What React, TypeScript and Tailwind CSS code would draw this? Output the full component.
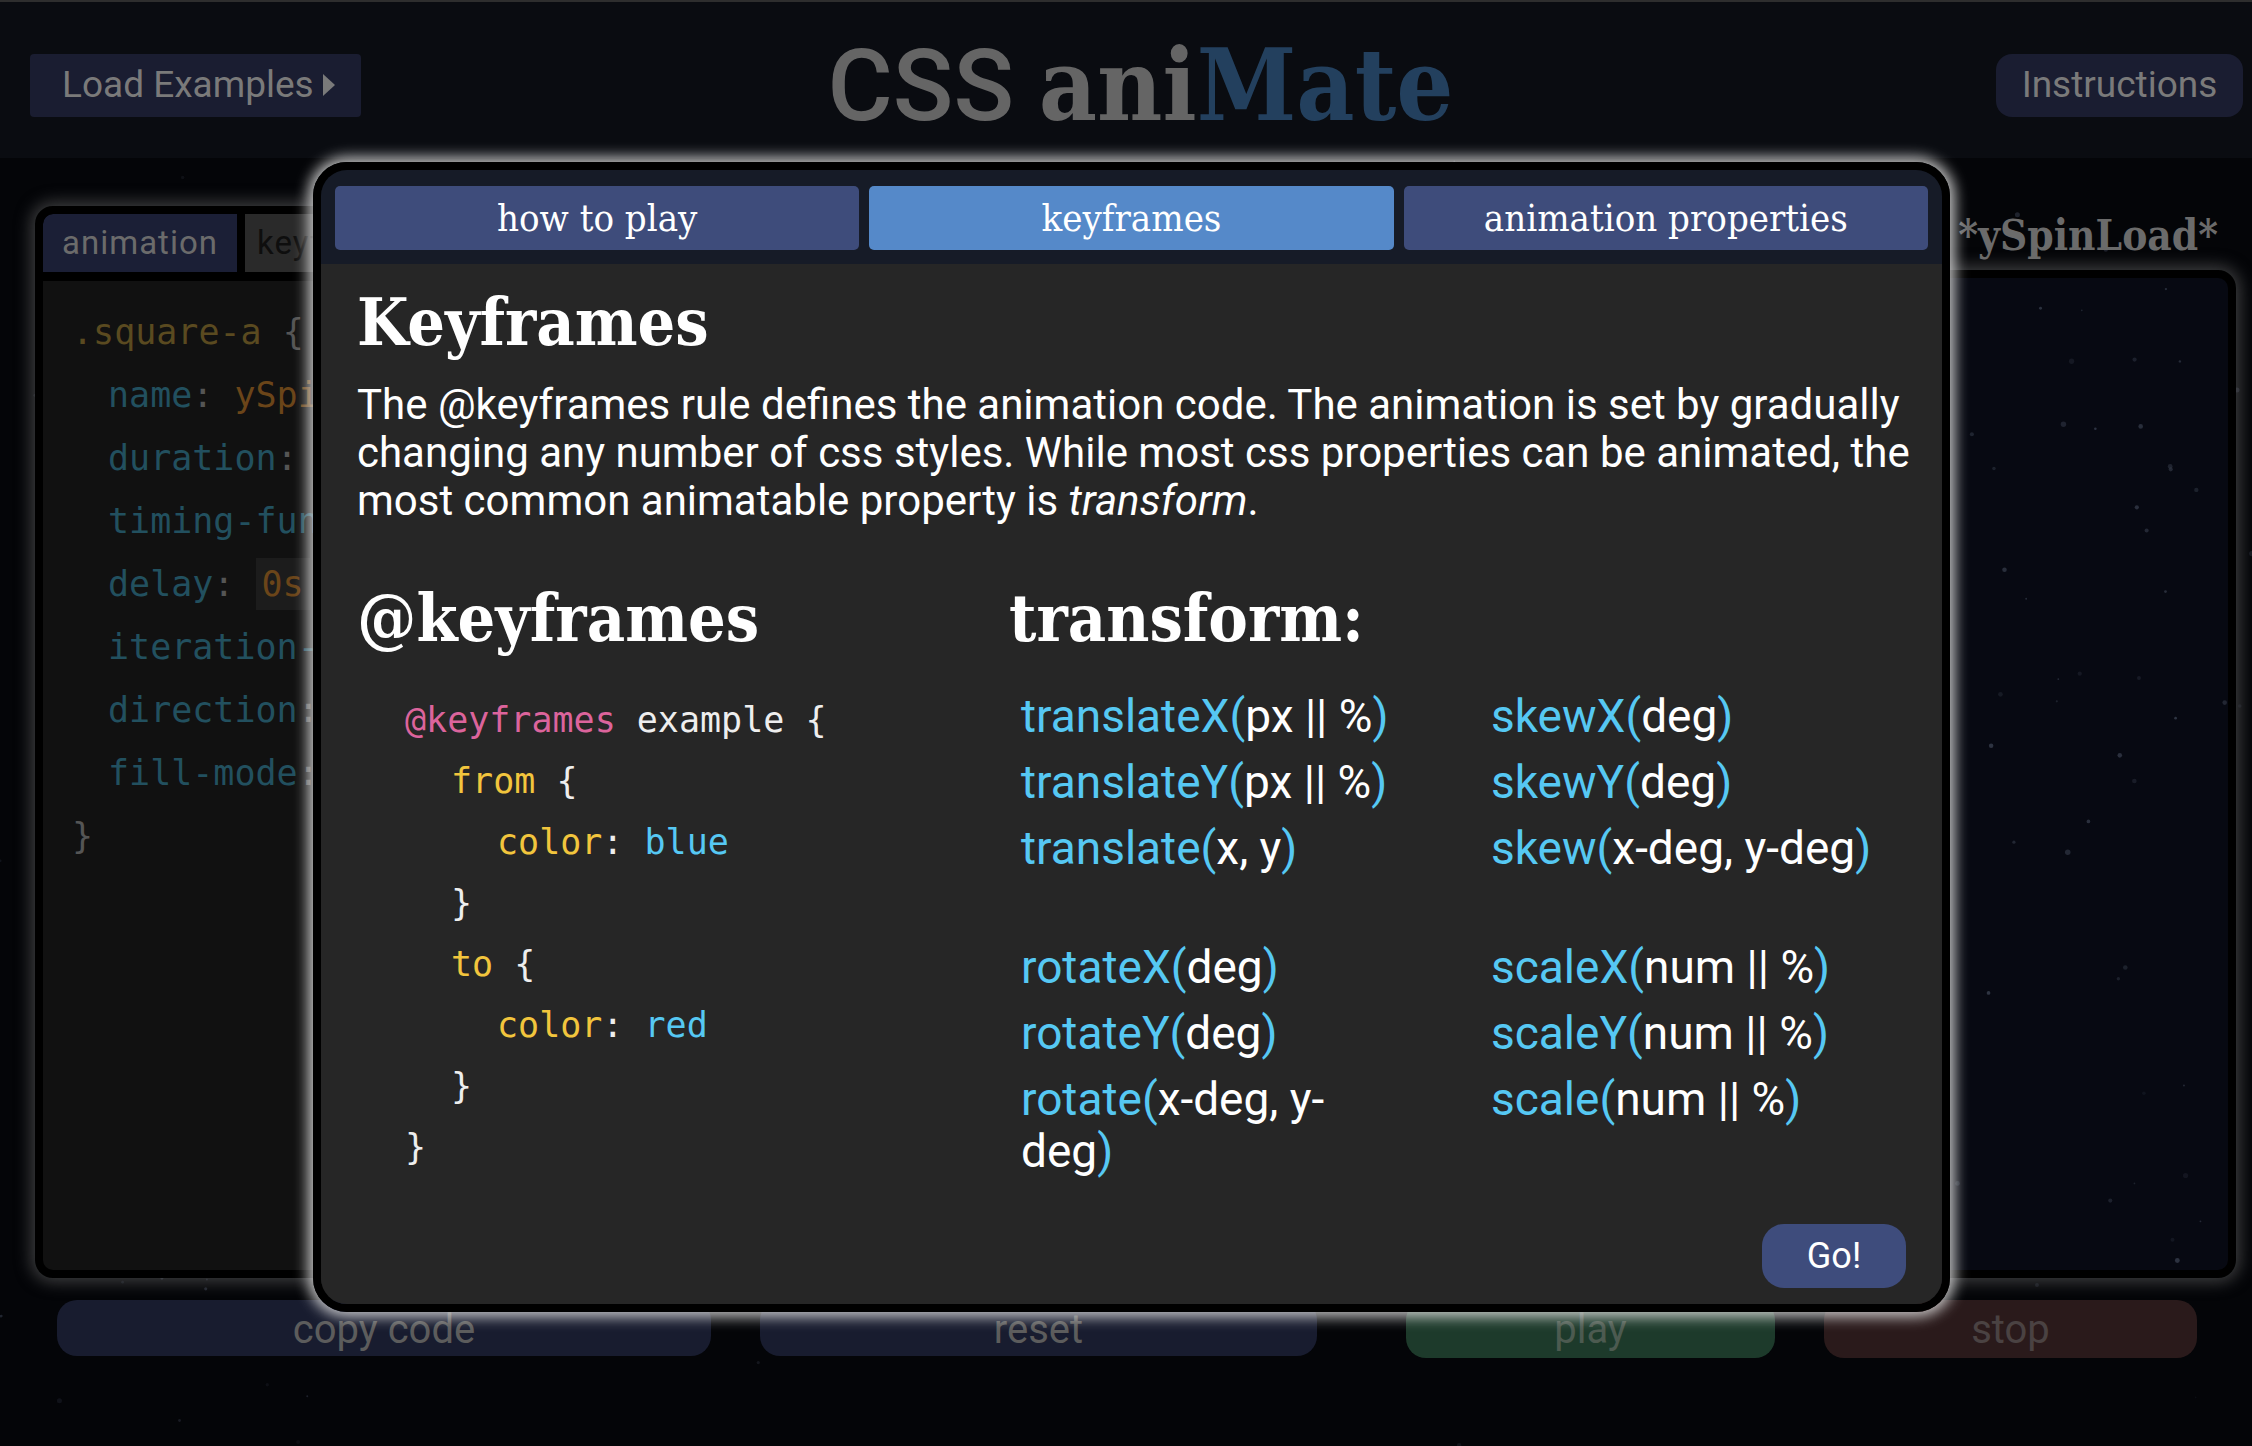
import React from 'react';

const slab = "font-['DejaVu_Serif_Condensed','DejaVu_Serif',serif]";
const mono = "font-['DejaVu_Sans_Mono',monospace]";
const sans = "font-['Roboto','Liberation_Sans',sans-serif]";

type StarProps = { w: number; h: number; n: number; seed: number; fill: string };

const Stars = ({ w, h, n, seed, fill }: StarProps) => {
  let s = seed;
  const rnd = () => {
    s = (s * 48271) % 2147483647;
    return s / 2147483647;
  };
  const stars = Array.from({ length: n }, () => [rnd() * w, rnd() * h, 0.8 + rnd() * 2, 0.2 + rnd() * 0.6]);
  return (
    <svg className="absolute inset-0 pointer-events-none" width={w} height={h} viewBox={`0 0 ${w} ${h}`}>
      {stars.map(([x, y, r, o], i) => (
        <circle key={i} cx={x} cy={y} r={r} fill={fill} opacity={o} />
      ))}
    </svg>
  );
};

const editorLines = [
  { prop: 'name', value: 'ySpinLoad' },
  { prop: 'duration', value: '2s' },
  { prop: 'timing-function', value: 'ease' },
  { prop: 'delay', value: '0s', boxed: true },
  { prop: 'iteration-count', value: 'infinite' },
  { prop: 'direction', value: 'normal' },
  { prop: 'fill-mode', value: 'none' },
];

// [function, argument, optional argument tail that wraps onto its own line]
const transformsLeft = [
  ['translateX', 'px || %'],
  ['translateY', 'px || %'],
  ['translate', 'x, y'],
  null,
  ['rotateX', 'deg'],
  ['rotateY', 'deg'],
  ['rotate', 'x-deg, y-', 'deg'],
];

const transformsRight = [
  ['skewX', 'deg'],
  ['skewY', 'deg'],
  ['skew', 'x-deg, y-deg'],
  null,
  ['scaleX', 'num || %'],
  ['scaleY', 'num || %'],
  ['scale', 'num || %'],
];

const TransformList = ({ items }: { items: (string[] | null)[] }) => (
  <div>
    {items.map((item, i) =>
      item === null ? (
        <div key={i} className="h-[53px]" />
      ) : (
        <div key={i} className="leading-[52px] mb-[14px]">
          <span className="text-[#56c8f3]">{item[0]}(</span>
          <span className="text-white">
            {item[1]}
            {item[2] && (
              <>
                <br />
                {item[2]}
              </>
            )}
          </span>
          <span className="text-[#56c8f3]">)</span>
        </div>
      )
    )}
  </div>
);

const Modal = () => (
  <div className="absolute left-[313px] top-[162px] w-[1637px] h-[1150px] border-[8px] border-black rounded-[34px] overflow-hidden flex flex-col shadow-[0_0_14px_5px_rgba(225,225,225,0.85)]">
    <div className="bg-[#161b27] pt-[16px] pb-[14px] px-[14px] grid grid-cols-3 gap-[10px]">
      {['how to play', 'keyframes', 'animation properties'].map((t) => (
        <div
          key={t}
          className={`h-[64px] rounded-[5px] flex items-center justify-center text-white text-[38px] ${slab} ${
            t === 'keyframes' ? 'bg-[#5589c9]' : 'bg-[#3e4c7b]'
          }`}
        >
          {t}
        </div>
      ))}
    </div>

    <div className="flex-1 bg-[#262626] flex flex-col pl-[36px] pr-[36px] pt-[25px]">
      <h2 className={`${slab} font-bold text-white text-[66px] leading-none`}>Keyframes</h2>
      <p className={`${sans} text-white text-[42px] leading-[48px] mt-[26px] whitespace-nowrap`}>
        The @keyframes rule defines the animation code. The animation is set by gradually
        <br />
        changing any number of css styles. While most css properties can be animated, the
        <br />
        most common animatable property is <em>transform</em>.
      </p>

      <div className="grid grid-cols-[652px_1fr] mt-[60px]">
        <div>
          <h3 className={`${slab} font-bold text-white text-[66px] leading-none`}>@keyframes</h3>
          <div className={`${mono} text-[35px] leading-[61px] text-[#eeeeee] mt-[39px] pl-[48px]`}>
            <div>
              <span className="text-[#dc649c]">@keyframes</span> example {'{'}
            </div>
            <div className="pl-[46px]">
              <span className="text-[#f2c53d]">from</span> {'{'}
            </div>
            <div className="pl-[92px]">
              <span className="text-[#f2c53d]">color</span>: <span className="text-[#56c8f3]">blue</span>
            </div>
            <div className="pl-[46px]">{'}'}</div>
            <div className="pl-[46px]">
              <span className="text-[#f2c53d]">to</span> {'{'}
            </div>
            <div className="pl-[92px]">
              <span className="text-[#f2c53d]">color</span>: <span className="text-[#56c8f3]">red</span>
            </div>
            <div className="pl-[46px]">{'}'}</div>
            <div>{'}'}</div>
          </div>
        </div>
        <div>
          <h3 className={`${slab} font-bold text-white text-[66px] leading-none`}>transform:</h3>
          <div className={`${sans} text-[46px] grid grid-cols-[470px_1fr] mt-[39px] pl-[12px]`}>
            <TransformList items={transformsLeft} />
            <TransformList items={transformsRight} />
          </div>
        </div>
      </div>

      <div className="mt-auto flex justify-end pb-[16px]">
        <button className={`${sans} w-[144px] h-[64px] rounded-[22px] bg-[#3e4c7c] text-white text-[36px]`}>Go!</button>
      </div>
    </div>
  </div>
);

export default function App() {
  return (
    <div className={`relative w-[2252px] h-[1446px] overflow-hidden bg-[#040508] ${sans}`}>
      <Stars w={2252} h={1446} n={260} seed={7} fill="#2a2f3c" />

      <header className="relative h-[158px] bg-[#0a0c11] border-t-[2px] border-[#2e2e2e] grid grid-cols-[1fr_auto_1fr] items-center pt-[10px] pl-[30px] pr-[9px]">
        <div>
          <button className="w-[331px] h-[63px] bg-[#1a1d31] rounded-[4px] flex items-center pl-[32px] gap-[9px] text-[#7a7a7a] text-[37px]">
            Load Examples
            <svg width="12" height="22" viewBox="0 0 12 22">
              <polygon points="0,0 12,11 0,22" fill="#7a7a7a" />
            </svg>
          </button>
        </div>
        <h1 className="text-[100px] leading-none whitespace-nowrap pl-[8px]">
          <span className={`${sans} font-medium text-[#656565]`}>CSS </span>
          <span className={`${slab} font-bold text-[#656565]`}>ani</span>
          <span className={`${slab} font-bold text-[#23405e]`}>Mate</span>
        </h1>
        <div className="flex justify-end">
          <button className="w-[247px] h-[63px] bg-[#1a1d31] rounded-[16px] text-[#7a7a7a] text-[37px]">Instructions</button>
        </div>
      </header>

      <main className="relative flex mt-[48px] pl-[35px] pr-[16px]">
        <section className="w-[1305px] h-[1072px] border-[8px] border-black rounded-[18px] bg-black flex flex-col overflow-hidden shadow-[0_0_16px_4px_rgba(110,110,110,0.55)]">
          <div className="flex gap-[8px] h-[58px]">
            <div className="w-[194px] bg-[#1b1f36] rounded-tl-[10px] flex items-center justify-center text-[#6b6b6b] text-[33px] tracking-[1px]">
              animation
            </div>
            <div className="w-[194px] bg-[#2a2a2a] flex items-center pl-[12px] text-[#0e0e0e] text-[33px] tracking-[1px]">
              keyframes
            </div>
          </div>
          <div className={`flex-1 mt-[9px] bg-[#111111] pt-[20px] pl-[29px] ${mono} text-[35px] leading-[63px] text-[#555]`}>
            <div>
              <span className="text-[#5a4a20]">.square-a</span> {'{'}
            </div>
            {editorLines.map((l) => (
              <div key={l.prop} className="pl-[36px]">
                <span className="text-[#22505f]">{l.prop}</span>:{' '}
                <span className={`text-[#6b4519] ${l.boxed ? 'bg-[#1c1c1c] px-[6px] py-[6px]' : ''}`}>{l.value}</span>
              </div>
            ))}
            <div>{'}'}</div>
          </div>
        </section>

        <section className="ml-[40px] flex-1 flex flex-col">
          <div className={`h-[64px] flex items-center justify-end pr-[18px] pb-[6px] ${slab} font-bold text-[42px] text-[#6b6b6b]`}>
            *ySpinLoad*
          </div>
          <div className="relative flex-1 border-[8px] border-black rounded-[18px] bg-[#070912] overflow-hidden shadow-[0_0_16px_4px_rgba(110,110,110,0.55)]">
            <Stars w={840} h={1000} n={140} seed={31} fill="#39404f" />
          </div>
        </section>
      </main>

      <div className="relative flex items-start mt-[22px] pl-[57px] text-[40px]">
        <button className="w-[654px] h-[56px] rounded-[20px] bg-[#181c2f] text-[#5c5c5c]">copy code</button>
        <button className="w-[557px] h-[56px] rounded-[20px] bg-[#181c2f] text-[#5c5c5c] ml-[49px]">reset</button>
        <button className="w-[369px] h-[58px] rounded-[20px] bg-[#1d3a2b] text-[#4c5a50] ml-[89px]">play</button>
        <button className="w-[373px] h-[58px] rounded-[20px] bg-[#2a1a1b] text-[#4a4242] ml-[49px]">stop</button>
      </div>

      <Modal />
    </div>
  );
}
